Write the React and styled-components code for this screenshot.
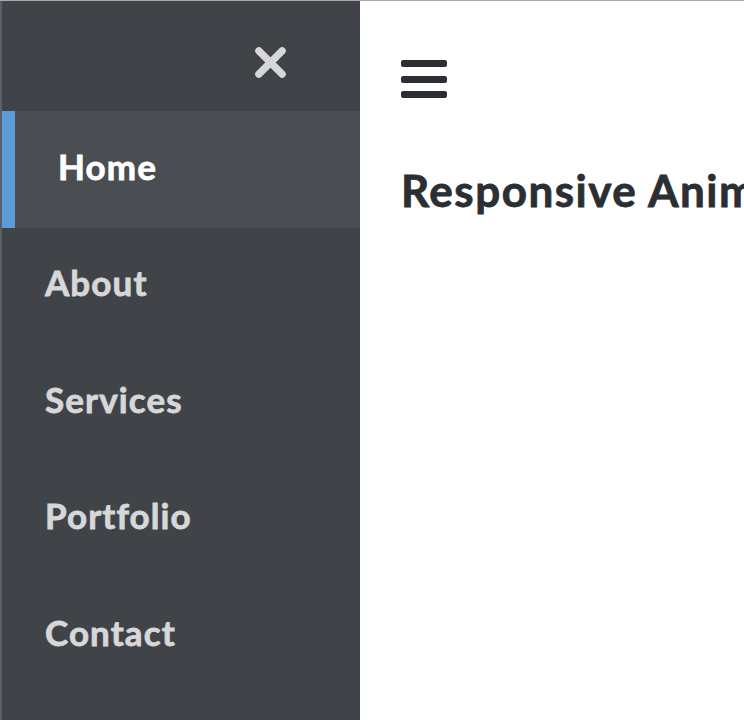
import React, { useState } from 'react';
import styled, { createGlobalStyle } from 'styled-components';

const GlobalStyle = createGlobalStyle`
  html, body {
    margin: 0;
    padding: 0;
    background: #ffffff;
  }
  body {
    font-family: Lato, "Open Sans", "Liberation Sans", sans-serif;
    border-top: 1px solid #a9a9a9;
  }
`;

const Layout = styled.div`
  display: flex;
  height: 719px;
  overflow: hidden;
`;

const Sidebar = styled.aside`
  width: 358px;
  flex-shrink: 0;
  background: #404448;
  border-left: 2px solid #5a6068;
  display: flex;
  flex-direction: column;
`;

const SidebarHeader = styled.div`
  height: 110px;
  display: flex;
  align-items: flex-start;
  justify-content: flex-end;
  padding: 45px 73px 0 0;
  box-sizing: border-box;
`;

const CloseButton = styled.button`
  border: none;
  background: none;
  padding: 0;
  width: 33px;
  height: 33px;
  display: flex;
  align-items: center;
  justify-content: center;
  cursor: pointer;

  svg {
    width: 33px;
    height: 33px;
  }
`;

const NavList = styled.nav`
  display: flex;
  flex-direction: column;
`;

const NavItem = styled.a`
  height: 116.5px;
  display: flex;
  align-items: center;
  box-sizing: border-box;
  padding-left: 43px;
  padding-bottom: 7px;
  border-left: ${props => (props.active ? '13px solid #5b9bd6' : '0 solid transparent')};
  background: ${props => (props.active ? '#4a4e53' : 'transparent')};
  color: ${props => (props.active ? '#ffffff' : '#d6d7d8')};
  -webkit-text-stroke: 0.8px ${props => (props.active ? '#ffffff' : '#d6d7d8')};
  font-size: 35px;
  font-weight: 700;
  text-decoration: none;
  letter-spacing: 1.1px;
  cursor: pointer;
`;

const Main = styled.main`
  flex: 1;
  padding: 57px 0 0 41px;
  overflow: hidden;
  white-space: nowrap;
`;

const MenuButton = styled.button`
  border: none;
  background: none;
  width: 46px;
  height: 42px;
  display: flex;
  flex-direction: column;
  justify-content: space-between;
  padding: 2px 0;
  box-sizing: border-box;
  cursor: pointer;
`;

const MenuBar = styled.span`
  display: block;
  height: 7px;
  border-radius: 2px;
  background: #2b2e33;
`;

const Title = styled.h1`
  margin: 62px 0 0;
  font-size: 44px;
  line-height: 56px;
  font-weight: 700;
  color: #2b2e33;
  -webkit-text-stroke: 0.8px #2b2e33;
  letter-spacing: 1.5px;
`;

const links = ['Home', 'About', 'Services', 'Portfolio', 'Contact'];

const App = () => {
  const [active, setActive] = useState('Home');

  return (
    <>
      <GlobalStyle />
      <Layout>
        <Sidebar>
          <SidebarHeader>
            <CloseButton aria-label="Close menu">
              <svg viewBox="0 0 34 34" fill="none" stroke="#d7d7d7" strokeWidth="7.5" strokeLinecap="round">
                <path d="M5 5 L29 29 M29 5 L5 29" />
              </svg>
            </CloseButton>
          </SidebarHeader>
          <NavList>
            {links.map(link => (
              <NavItem
                key={link}
                active={active === link ? 1 : 0}
                onClick={() => setActive(link)}
              >
                {link}
              </NavItem>
            ))}
          </NavList>
        </Sidebar>
        <Main>
          <MenuButton aria-label="Open menu">
            <MenuBar />
            <MenuBar />
            <MenuBar />
          </MenuButton>
          <Title>Responsive Animated Sidebar Menu</Title>
        </Main>
      </Layout>
    </>
  );
};

export default App;
